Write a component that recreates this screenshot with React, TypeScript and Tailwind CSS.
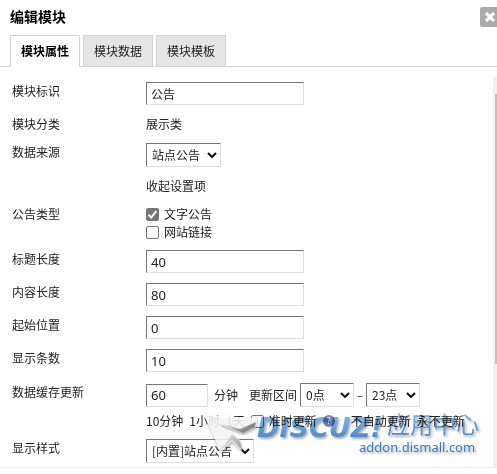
import { useState } from "react";
import type { ReactNode } from "react";

interface RowProps {
  label?: string;
  htmlFor?: string;
  className?: string;
  children: ReactNode;
}

const FIELD = "border border-t-[#777] border-l-[#777] border-r-[#ddd] border-b-[#ddd] bg-white text-[#222]";

function Row({ label, htmlFor, className = "py-[5px]", children }: RowProps) {
  return (
    <div className={`flex items-start ${className}`}>
      <div className="w-[134px] shrink-0">
        {label && (htmlFor ? <label htmlFor={htmlFor}>{label}</label> : <span>{label}</span>)}
      </div>
      <div className="min-w-0 flex-1">{children}</div>
    </div>
  );
}

function TextField({ id, value, width = "w-[158px]", size = "text-[13px]" }: { id: string; value: string; width?: string; size?: string }) {
  return (
    <input
      id={id}
      type="text"
      defaultValue={value}
      className={`${FIELD} ${width} ${size} block h-[23px] px-1 font-['Noto_Sans','Noto_Sans_CJK_SC',sans-serif] outline-none`}
    />
  );
}

function SelectField({ id, options, width, label }: { id: string; options: string[]; width: string; label?: string }) {
  return (
    <div className={`relative ${width}`}>
      <select id={id} aria-label={label} className={`${FIELD} block h-6 w-full appearance-none pl-[5px] outline-none`}>
        {options.map((o) => (
          <option key={o}>{o}</option>
        ))}
      </select>
      <svg viewBox="0 0 10 6" className="pointer-events-none absolute top-[9px] right-1 h-1.5 w-2.5" fill="none" stroke="#111" strokeWidth="2">
        <path d="M1 1l4 4 4-4" />
      </svg>
    </div>
  );
}

function CheckBox({ checked = false }: { checked?: boolean }) {
  return (
    <span className="relative block h-[13px] w-[13px] shrink-0">
      <input
        type="checkbox"
        defaultChecked={checked}
        className="peer block h-[13px] w-[13px] appearance-none rounded-[2px] border border-[#767676] bg-white checked:bg-[#767676]"
      />
      <svg viewBox="0 0 13 13" className="pointer-events-none absolute inset-0 hidden peer-checked:block" fill="none" stroke="#fff" strokeWidth="2">
        <path d="M2.5 6.8l2.8 2.7 5-6.5" />
      </svg>
    </span>
  );
}

function Watermark() {
  return (
    <>
      {/* paper plane */}
      <svg viewBox="0 0 300 64" className="pointer-events-none absolute right-0 bottom-0 h-16 w-[300px]">
        <defs>
          <filter id="planeShade" x="-20%" y="-20%" width="140%" height="150%">
            <feDropShadow dx="0.5" dy="1.5" stdDeviation="1" floodColor="#333" floodOpacity="0.6" />
          </filter>
          <linearGradient id="fold" x1="0" y1="0" x2="1" y2="0.5">
            <stop offset="0" stopColor="#eee" />
            <stop offset="1" stopColor="#777" />
          </linearGradient>
        </defs>
        <g filter="url(#planeShade)">
          <path d="M7 12l53 3-1 9-13 6-25-9 22 16 2 11-10-10-11 11z" fill="#fff" fillOpacity="0.8" />
        </g>
        <path d="M21 20l22 6 16-7-1 5-12 6z" fill="url(#fold)" />
        <path d="M24 47l11-16 8 7 2 9-10-10z" fill="url(#fold)" fillOpacity="0.6" />
      </svg>
      {/* lettering, darkens what lies below it */}
      <svg
        viewBox="0 0 300 64"
        className="pointer-events-none absolute right-0 bottom-0 h-16 w-[300px] mix-blend-multiply"
        fontFamily='"Noto Sans", "Noto Sans CJK SC", sans-serif'
      >
        <defs>
          <linearGradient id="blue" x1="0" y1="0" x2="0" y2="1">
            <stop offset="0.1" stopColor="#86b6e2" />
            <stop offset="0.9" stopColor="#4688c6" />
          </linearGradient>
          <filter id="shade" x="-20%" y="-20%" width="140%" height="160%">
            <feDropShadow dx="1.5" dy="2" stdDeviation="1.3" floodColor="#555" floodOpacity="0.5" />
          </filter>
        </defs>
        <g filter="url(#shade)" fill="url(#blue)">
          <text x="60" y="34" fontFamily='"DejaVu Sans", sans-serif' fontSize="27" fontWeight="700" fontStyle="italic">DISCUZ!</text>
          <text x="190" y="30" fontSize="23">应用中心</text>
          <text x="162" y="49" fontSize="13" fill="#3a7ab8">addon.dismall.com</text>
        </g>
      </svg>
    </>
  );
}

const TABS = ["模块属性", "模块数据", "模块模板"];

export default function App() {
  const [active, setActive] = useState(0);

  return (
    <div className="overflow-hidden bg-white pb-[6px] font-['Noto_Sans_CJK_SC',sans-serif] text-xs leading-[18px] text-[#222]">
      <header className="flex items-start justify-between pt-[7px] pl-2.5">
        <h3 className="text-sm leading-[18px] font-bold text-black">编辑模块</h3>
        <button type="button" aria-label="关闭" className="-mr-[3px] flex h-5 w-5 items-center justify-center rounded-[2px] bg-[#aaa]">
          <svg viewBox="0 0 10 10" className="h-2.5 w-2.5" stroke="#fff" strokeWidth="3.2">
            <path d="M1 1l8 8M9 1l-8 8" />
          </svg>
        </button>
      </header>

      <nav className="mt-2 flex gap-[3px] border-b border-[#d4d4d4] pl-2.5">
        {TABS.map((tab, i) => (
          <button
            key={tab}
            type="button"
            onClick={() => setActive(i)}
            className={`-mb-px h-8 w-[70px] border border-[#d4d4d4] ${active === i ? "border-b-white bg-white font-bold text-black" : "bg-[#e5e5e5]"}`}
          >
            {tab}
          </button>
        ))}
      </nav>

      <div className="relative mt-2.5 border-b border-[#eee]">
        <form className="pl-3">
          <Row label="模块标识" htmlFor="name">
            <TextField id="name" value="公告" size="text-xs" />
          </Row>
          <Row label="模块分类">展示类</Row>
          <Row label="数据来源" htmlFor="source" className="py-[5px]">
            <SelectField id="source" width="w-[75px]" options={["站点公告"]} />
          </Row>
          <Row className="pt-[5px] pb-[6px]">
            <a href="#settings">收起设置项</a>
          </Row>
          <Row label="公告类型" className="py-1">
            <label className="flex items-center gap-[5px]">
              <CheckBox checked />
              文字公告
            </label>
            <label className="flex items-center gap-[5px]">
              <CheckBox />
              网站链接
            </label>
          </Row>
          <Row label="标题长度" htmlFor="titleLength">
            <TextField id="titleLength" value="40" />
          </Row>
          <Row label="内容长度" htmlFor="summaryLength">
            <TextField id="summaryLength" value="80" />
          </Row>
          <Row label="起始位置" htmlFor="start">
            <TextField id="start" value="0" />
          </Row>
          <Row label="显示条数" htmlFor="count">
            <TextField id="count" value="10" />
          </Row>
          <Row label="数据缓存更新" htmlFor="cache" className="pt-[6px] pb-[5px]">
            <div className="flex items-center">
              <TextField id="cache" value="60" width="w-[62px]" />
              <span className="ml-1.5">分钟</span>
              <span className="mr-[3px] ml-[11px]">更新区间</span>
              <SelectField id="from" label="开始" width="w-[54px]" options={["0点"]} />
              <span className="w-3 text-center">–</span>
              <SelectField id="to" label="结束" width="w-[54px]" options={["23点"]} />
            </div>
            <div className="mt-[5px] flex items-center gap-1.5 whitespace-nowrap">
              <a href="#10m">10分钟</a>
              <a href="#1h">1小时</a>
              <a href="#1d">1天</a>
              <label className="flex items-center gap-[5px]">
                <CheckBox />
                准时更新
              </label>
              <span className="flex h-3 w-3 items-center justify-center rounded-full bg-[#7b83b8] text-[9px] text-white">?</span>
              <a href="#manual" className="ml-2.5">不自动更新</a>
              <a href="#never">永不更新</a>
            </div>
          </Row>
          <Row label="显示样式" htmlFor="style" className="py-1">
            <SelectField id="style" width="w-[108px]" options={["[内置]站点公告"]} />
          </Row>
        </form>

        {/* scroll track */}
        <div className="absolute inset-y-0 right-0 w-1 bg-[#f1f1f1] pt-[17px] pl-0.5">
          <div className="h-[270px] bg-[#c1c1c1]" />
        </div>
        <Watermark />
      </div>
    </div>
  );
}
